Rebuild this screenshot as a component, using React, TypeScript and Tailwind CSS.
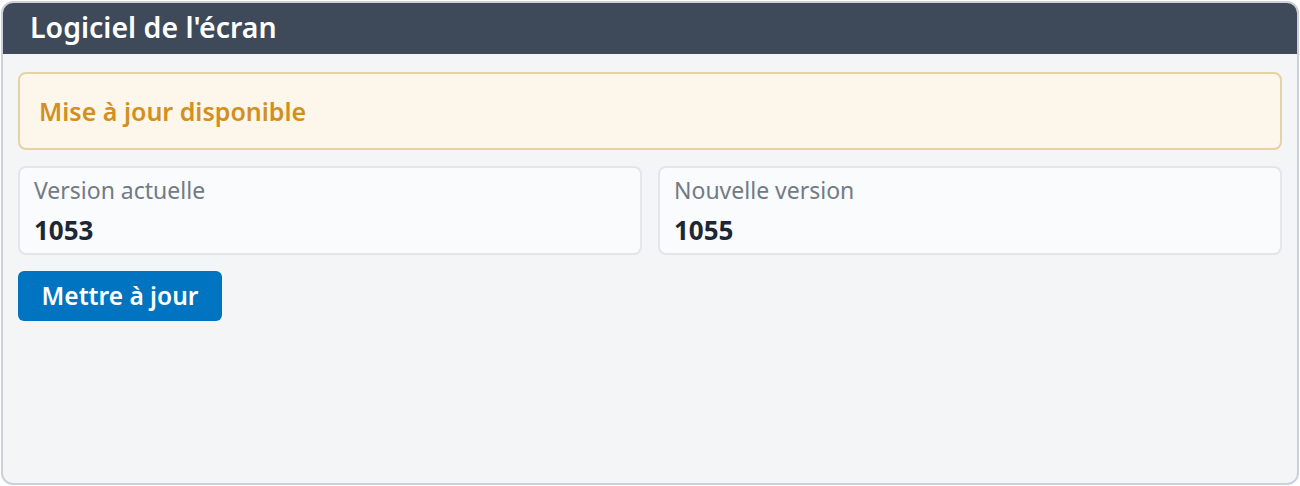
export default function App() {
  return (
    <div
      className="w-[1300px] h-[486px] p-px bg-white"
      style={{ fontFamily: '"Noto Sans", "Open Sans", sans-serif' }}
    >
      <div className="h-full flex flex-col rounded-[12px] border-2 border-[#cbd0da] bg-[#f3f5f7] overflow-hidden">
        <div className="h-[51px] shrink-0 bg-[#3e4a59] flex items-center px-[27px]">
          <h1 className="text-[28.5px] font-semibold text-white leading-none -mt-[2px]">Logiciel de l'écran</h1>
        </div>
        <div className="flex flex-col gap-4 px-[15px] pt-[18px]">
          <div className="h-[78px] rounded-[8px] border-2 border-[#e6d2a2] bg-[#fdf6ea] flex items-center px-[19px]">
            <span className="text-[25px] font-semibold text-[#d1901f] leading-none">Mise à jour disponible</span>
          </div>
          <div className="grid grid-cols-2 gap-4">
            <div className="h-[89px] rounded-[8px] border-2 border-[#e1e6eb] bg-[#f9fbfc] px-[14px] pt-[7px] flex flex-col">
              <span className="text-[23px] text-[#727a84] leading-[30px]">Version actuelle</span>
              <span className="text-[26px] font-bold text-[#1d2633] leading-[30px] mt-[10px]">1053</span>
            </div>
            <div className="h-[89px] rounded-[8px] border-2 border-[#e1e6eb] bg-[#f9fbfc] px-[14px] pt-[7px] flex flex-col">
              <span className="text-[23px] text-[#727a84] leading-[30px]">Nouvelle version</span>
              <span className="text-[26px] font-bold text-[#1d2633] leading-[30px] mt-[10px]">1055</span>
            </div>
          </div>
          <div>
            <button className="h-[50px] w-[204px] rounded-[6px] bg-[#0074c1] text-white text-[24.5px] font-semibold leading-none">
              Mettre à jour
            </button>
          </div>
        </div>
      </div>
    </div>
  );
}
